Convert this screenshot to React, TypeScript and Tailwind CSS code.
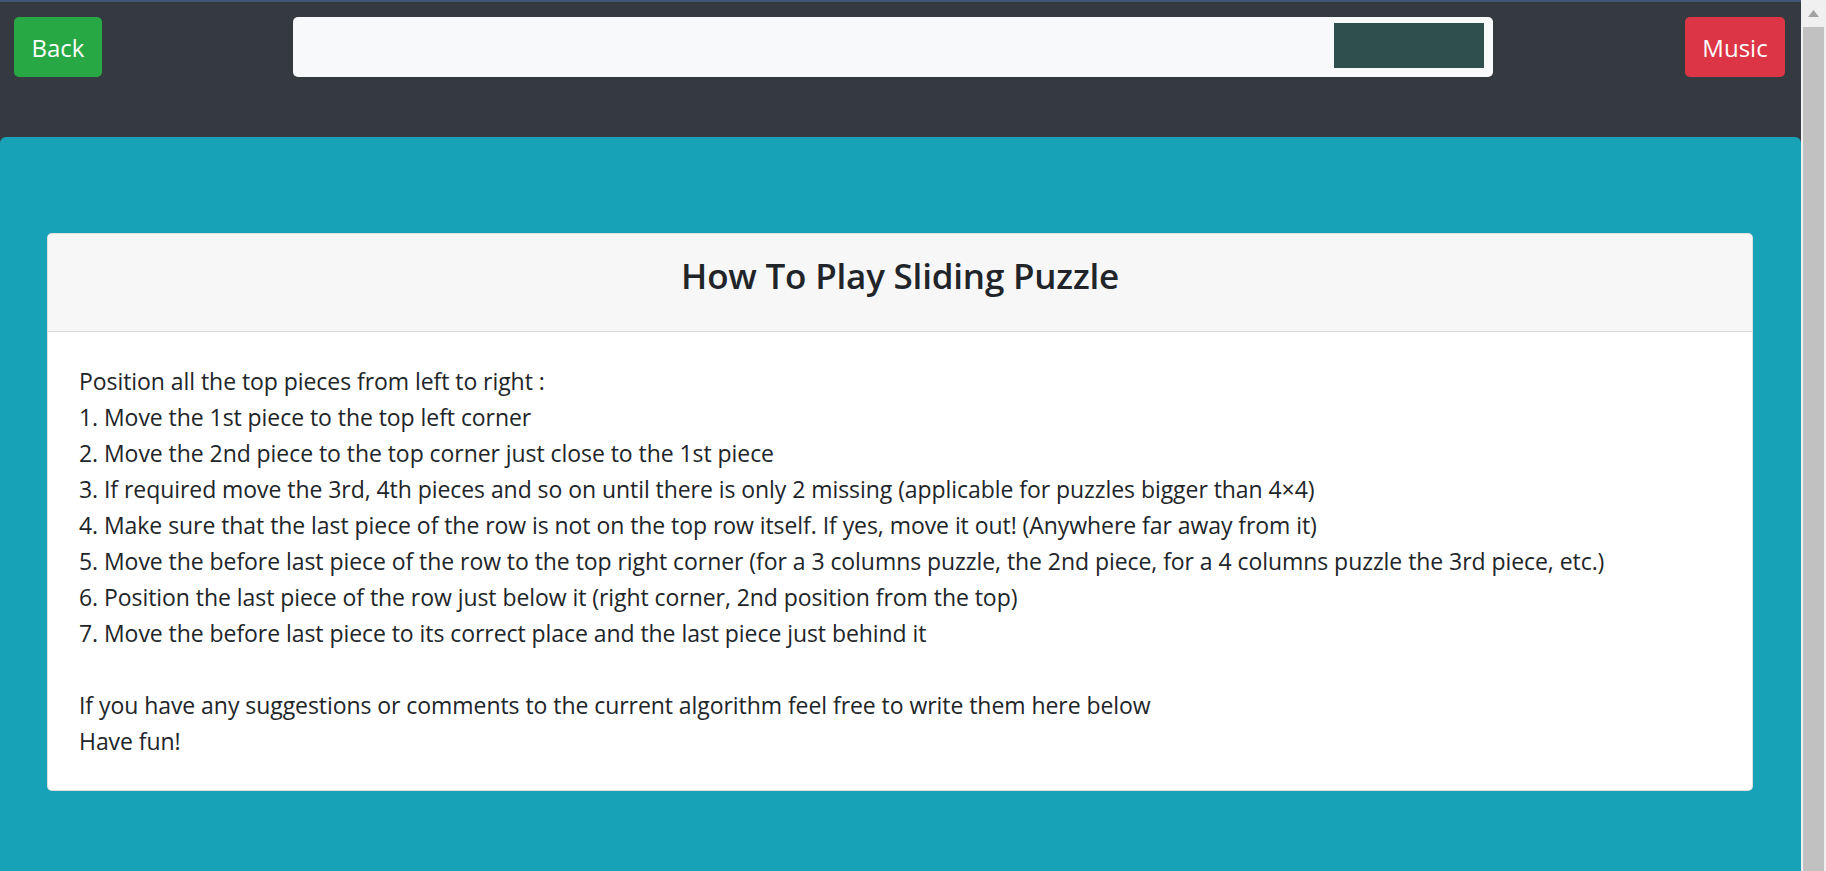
import React from "react";

const steps = [
  "Position all the top pieces from left to right :",
  "1. Move the 1st piece to the top left corner",
  "2. Move the 2nd piece to the top corner just close to the 1st piece",
  "3. If required move the 3rd, 4th pieces and so on until there is only 2 missing (applicable for puzzles bigger than 4×4)",
  "4. Make sure that the last piece of the row is not on the top row itself. If yes, move it out! (Anywhere far away from it)",
  "5. Move the before last piece of the row to the top right corner (for a 3 columns puzzle, the 2nd piece, for a 4 columns puzzle the 3rd piece, etc.)",
  "6. Position the last piece of the row just below it (right corner, 2nd position from the top)",
  "7. Move the before last piece to its correct place and the last piece just behind it",
];

export default function App() {
  return (
    <div className="flex h-[871px] w-full overflow-hidden bg-white font-['Open_Sans',sans-serif]">
      <div className="flex flex-1 flex-col border-t-2 border-[#3f5477] bg-[#343a40]">
        {/* top bar */}
        <div className="flex h-[135px] shrink-0 items-start px-[14px] pt-[15px] pr-[16px]">
          <button className="h-[60px] w-[88px] rounded-[5px] bg-[#28a745] pt-[2px] text-[24px] text-white">
            Back
          </button>
          <div className="ml-[191px] flex h-[60px] w-[1200px] items-start justify-end rounded-[5px] bg-[#f8f9fa] pt-[6px] pr-[9px]">
            <div className="h-[45px] w-[150px] bg-[#2f4f4f]" />
          </div>
          <button className="ml-auto h-[60px] w-[100px] rounded-[5px] bg-[#dc3545] pt-[2px] text-[24px] text-white">
            Music
          </button>
        </div>

        {/* teal section */}
        <div className="flex-1 rounded-t-[6px] bg-[#17a2b8] px-[47px] pt-[96px] pr-[48px]">
          <div className="rounded-[5px] border border-[rgba(0,0,0,0.125)] bg-white">
            <div className="flex h-[98px] items-center justify-center rounded-t-[5px] border-b border-[rgba(0,0,0,0.125)] bg-[#f7f7f7]">
              <h3 className="pb-[12px] text-[35px] font-semibold tracking-[-0.2px] text-[#212529]">How To Play Sliding Puzzle</h3>
            </div>
            <div className="px-[31px] pt-[31px] pb-[31px] text-[23px] leading-[36px] tracking-[-0.06px] text-[#212529]">
              {steps.map((s) => (
                <div key={s}>{s}</div>
              ))}
              <div className="h-[36px]" />
              <div>If you have any suggestions or comments to the current algorithm feel free to write them here below</div>
              <div>Have fun!</div>
            </div>
          </div>
        </div>
      </div>

      {/* scrollbar */}
      <div className="flex w-[25px] shrink-0 flex-col bg-[#f0f0f0] pl-[2px] pr-[2px]">
        <div className="flex h-[27px] items-center justify-center">
          <svg width="11" height="7" viewBox="0 0 11 7">
            <polygon points="5.5,0 11,7 0,7" fill="#a3a3a3" />
          </svg>
        </div>
        <div className="flex-1 bg-[#c1c1c1]" />
      </div>
    </div>
  );
}
